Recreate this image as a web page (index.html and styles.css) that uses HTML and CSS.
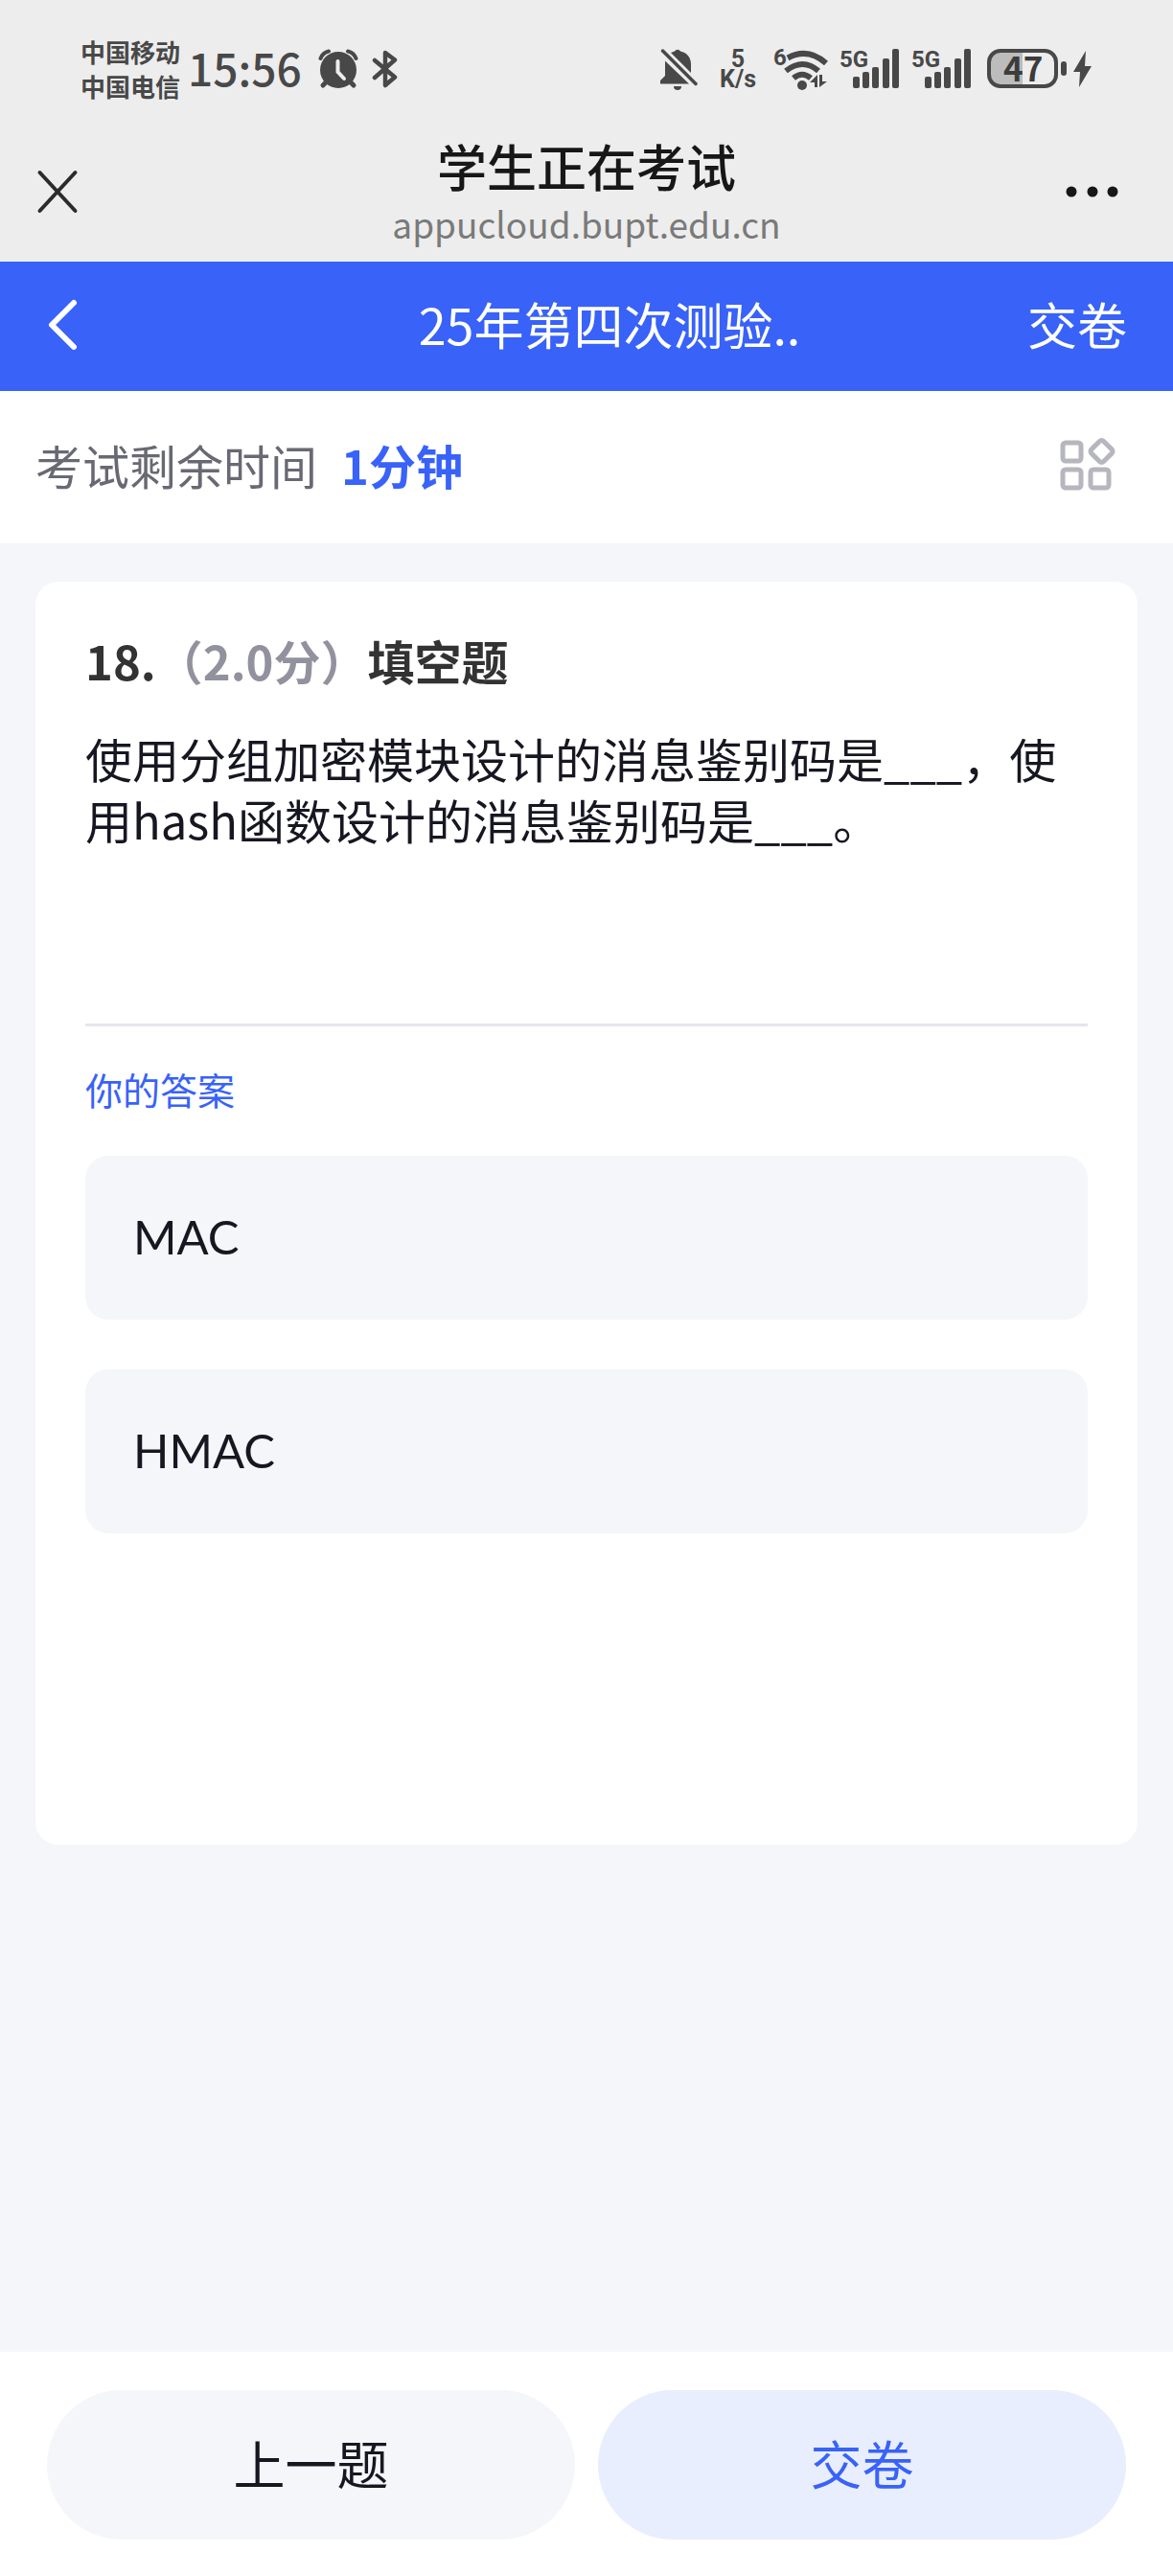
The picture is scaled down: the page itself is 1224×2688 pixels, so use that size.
FILE: index.html
```html
<!DOCTYPE html>
<html lang="zh-CN">
<head>
<meta charset="utf-8">
<meta name="viewport" content="width=device-width, initial-scale=1">
<title>学生正在考试</title>
<link rel="stylesheet" href="styles.css">
</head>
<body>
<div class="page">
  <div class="status">
    <div class="status-left">
      <div class="carriers"><span>中国移动</span><span>中国电信</span></div>
      <span class="clock">15:56</span>
      <svg class="alarm" width="42" height="42" viewBox="0 0 42 42" aria-hidden="true">
        <g fill="none" stroke="#484848" stroke-linecap="round">
          <path d="M2.500 10A12 12 0 0 1 11 2.500M39.500 10A12 12 0 0 0 31 2.500" stroke-width="4"/>
          <path d="M9 34l-4 4M33 34l4 4" stroke-width="5"/>
        </g>
        <circle cx="21" cy="22" r="19" fill="#484848"/>
        <path d="M20.500 13v11l6.500 7" fill="none" stroke="#ededed" stroke-width="4" stroke-linecap="round"/>
      </svg>
      <svg class="bluetooth" width="28" height="42" viewBox="0 0 28 42" aria-hidden="true">
        <path d="M3 12L24 29.500L14 38V4L24 11.500L3 30" fill="none" stroke="#484848" stroke-width="4.500" stroke-linejoin="round" stroke-linecap="round"/>
      </svg>
    </div>
    <div class="status-right">
      <svg class="bell" width="40" height="44" viewBox="0 0 40 44" aria-hidden="true">
        <path d="M5 13.500L30 37.500H0V34l5-5z" fill="#484848"/>
        <path d="M11 5l4-1.500a3.500 3.500 0 0 1 6 0C28 5 32 10 32 17v9z" fill="#484848"/>
        <path d="M14 40h8a4 4 0 0 1-8 0z" fill="#484848"/>
        <path d="M2.500 3L37 37.500" stroke="#484848" stroke-width="3.500" stroke-linecap="round"/>
      </svg>
      <div class="rate"><span>5</span><span>K/s</span></div>
      <svg class="wifi" width="60" height="58" viewBox="0 -6 60 58" aria-hidden="true">
        <text x="0" y="19" class="mark">6</text>
        <g fill="none" stroke="#484848" stroke-width="6">
          <path d="M15 11.500Q36 0 55 17"/>
          <path d="M13 25Q31 11 47 25"/>
          <path d="M21 32.500Q30 25 39 32.500"/>
        </g>
        <circle cx="30" cy="40" r="5" fill="#484848"/>
        <path d="M46 29v13h-3v-5h-5zM48 42V29h3v7h5z" fill="#484848"/>
      </svg>
      <svg class="signal" width="63" height="54" viewBox="0 -6 63 54" aria-hidden="true">
        <text x="0" y="19" class="mark">5G</text>
        <g fill="#484848"><rect x="14" y="29" width="7" height="12" rx="2"/><rect x="24" y="24" width="7" height="17" rx="2"/><rect x="34" y="19" width="7" height="22" rx="2"/><rect x="45" y="10" width="7" height="31" rx="2"/><rect x="55" y="0" width="7" height="41" rx="2"/></g>
      </svg>
      <svg class="signal second" width="63" height="54" viewBox="0 -6 63 54" aria-hidden="true">
        <text x="0" y="19" class="mark">5G</text>
        <g fill="#484848"><rect x="14" y="29" width="7" height="12" rx="2"/><rect x="24" y="24" width="7" height="17" rx="2"/><rect x="34" y="19" width="7" height="22" rx="2"/><rect x="45" y="10" width="7" height="31" rx="2"/><rect x="55" y="0" width="7" height="41" rx="2"/></g>
      </svg>
      <svg class="battery" width="110" height="54" viewBox="0 -6 110 54" aria-hidden="true">
        <path d="M37 2H14A12 12 0 0 0 2 14V27A12 12 0 0 0 14 39H37z" fill="#bcbcbc"/>
        <rect x="2" y="2" width="70" height="37" rx="12" fill="none" stroke="#484848" stroke-width="4"/>
        <rect x="77" y="13" width="6" height="15" rx="3" fill="#484848"/>
        <path d="M103 2L90 24h7l-1 16L109 18h-7z" fill="#484848"/>
        <text x="17" y="34" class="level">47</text>
      </svg>
    </div>
  </div>

  <header class="browser">
    <button class="icon-button" type="button" aria-label="关闭">
      <svg width="46" height="46" viewBox="0 0 46 46"><path d="M4.500 3L41.500 43M41.500 3L4.500 43" stroke="#2b2b2b" stroke-width="4" stroke-linecap="round"/></svg>
    </button>
    <div class="browser-title">
      <span class="name">学生正在考试</span>
      <span class="host">appucloud.bupt.edu.cn</span>
    </div>
    <button class="icon-button more" type="button" aria-label="更多">
      <svg width="56" height="14" viewBox="0 0 56 14"><g fill="#171717"><circle cx="6" cy="7" r="5.500"/><circle cx="28" cy="7" r="5.500"/><circle cx="49" cy="7" r="5.500"/></g></svg>
    </button>
  </header>

  <nav class="exam-bar">
    <button class="icon-button" type="button" aria-label="返回">
      <svg width="36" height="60" viewBox="0 0 36 60"><path d="M29 7L6 30L29 53" fill="none" stroke="#fff" stroke-width="6" stroke-linecap="round" stroke-linejoin="round"/></svg>
    </button>
    <h1>25年第四次测验..</h1>
    <button class="submit-link" type="button">交卷</button>
  </nav>

  <section class="timer">
    <p>考试剩余时间<strong>1分钟</strong></p>
    <button class="icon-button" type="button" aria-label="答题卡">
      <svg width="60" height="60" viewBox="0 0 60 60"><g fill="none" stroke="#b6b6be" stroke-width="5"><rect x="5" y="7" width="19" height="19" rx="3"/><rect x="5" y="35" width="19" height="19" rx="3"/><rect x="34" y="35" width="19" height="19" rx="3"/><rect x="36.500" y="7" width="18" height="18" rx="3" transform="rotate(45 45.500 16)"/></g></svg>
    </button>
  </section>

  <main>
    <article class="card">
      <h2>18.<span class="score">（2.0分）</span>填空题</h2>
      <p class="question">使用分组加密模块设计的消息鉴别码是___，使用hash函数设计的消息鉴别码是___。</p>
      <p class="answer-label" id="answers">你的答案</p>
      <div class="answers">
        <input type="text" value="MAC" aria-labelledby="answers">
        <input type="text" value="HMAC" aria-labelledby="answers">
      </div>
    </article>
  </main>

  <footer>
    <button class="prev" type="button">上一题</button>
    <button class="submit" type="button">交卷</button>
  </footer>
</div>
</body>
</html>
```
FILE: styles.css
```css
* { box-sizing: border-box; }
body {
  margin: 0;
  background: #f4f6fa;
  color: #171722;
  font-family: "Noto Sans CJK SC", sans-serif;
  font-size: 49px;
  line-height: 64px;
}
h1, h2, p { margin: 0; }
button, input { font: inherit; color: inherit; border: 0; margin: 0; padding: 0; background: none; }
svg { display: block; }

.page { min-height: 100vh; display: flex; flex-direction: column; }

.status {
  display: flex;
  justify-content: space-between;
  align-items: center;
  height: 144px;
  padding: 0 84px;
  background: #ededed;
  color: #484848;
}
.status-left, .status-right { display: flex; align-items: center; }
.carriers { display: flex; flex-direction: column; font-size: 26px; line-height: 36px; font-weight: 700; }
.clock { margin: 0 17px 0 8px; padding-bottom: 4px; font-size: 46px; font-weight: 500; }
.bluetooth { margin-left: 14px; }
.rate {
  display: flex;
  flex-direction: column;
  align-items: center;
  width: 42px;
  margin: 0 16px 0 20px;
  font: 700 25px/21px Roboto, sans-serif;
}
.signal { margin-left: 9px; }
.second { margin-left: 12px; }
.battery { margin-left: 16px; }
.mark { font: 700 24px Roboto, sans-serif; fill: #484848; }
.level { font-size: 35px; font-weight: 700; fill: #3c3c3c; }

.browser {
  display: grid;
  grid-template-columns: 75px 1fr 56px;
  align-items: center;
  padding: 0 56px 9px 37px;
  background: #ededed;
}
.browser .icon-button { padding-bottom: 8px; }
.browser-title { display: flex; flex-direction: column; align-items: center; }
.name { font-size: 52px; font-weight: 500; line-height: 58px; color: #171717; }
.host { font-size: 37px; line-height: 62px; color: #7a7a7a; }

.exam-bar {
  display: grid;
  grid-template-columns: 152px 1fr 104px;
  align-items: center;
  padding: 34px 48px 37px;
  background: #3862f8;
  color: #fff;
}
.exam-bar h1 { font-size: 52px; font-weight: 400; text-align: center; }
.exam-bar h1, .submit-link { padding-bottom: 2px; line-height: 62px; }
.submit-link { font-size: 52px; }

.timer {
  display: flex;
  justify-content: space-between;
  align-items: center;
  padding: 45px 60px 50px 37px;
  background: #fff;
  color: #696974;
}
.timer strong { margin-left: 25px; font-weight: 700; color: #3862f8; }

main { flex: 1; padding: 40px 37px; }
.card { padding: 50px 52px 325px; border-radius: 24px; background: #fff; }
h2 { font-size: 49px; font-weight: 700; color: #333; }
.score { color: #92929e; }
.question { min-height: 312px; margin-top: 38px; border-bottom: 3px solid #e4e6ec; }
.answer-label { margin: 33px 0 38px; font-size: 39px; color: #3862f8; }
.answers { display: grid; gap: 52px; }
.answers input {
  width: 100%;
  height: 171px;
  padding: 0 50px 4px;
  border-radius: 24px;
  background: #f4f6fa;
  font-family: Lato, "Noto Sans CJK SC", sans-serif;
}

footer { display: flex; gap: 24px; padding: 40px 49px 38px; background: #fff; }
footer button { flex: 1; height: 156px; padding-bottom: 4px; border-radius: 78px; font-size: 54px; }
.prev { background: #f4f6fa; }
.submit { background: #e8eefd; color: #3862f8; }
```
